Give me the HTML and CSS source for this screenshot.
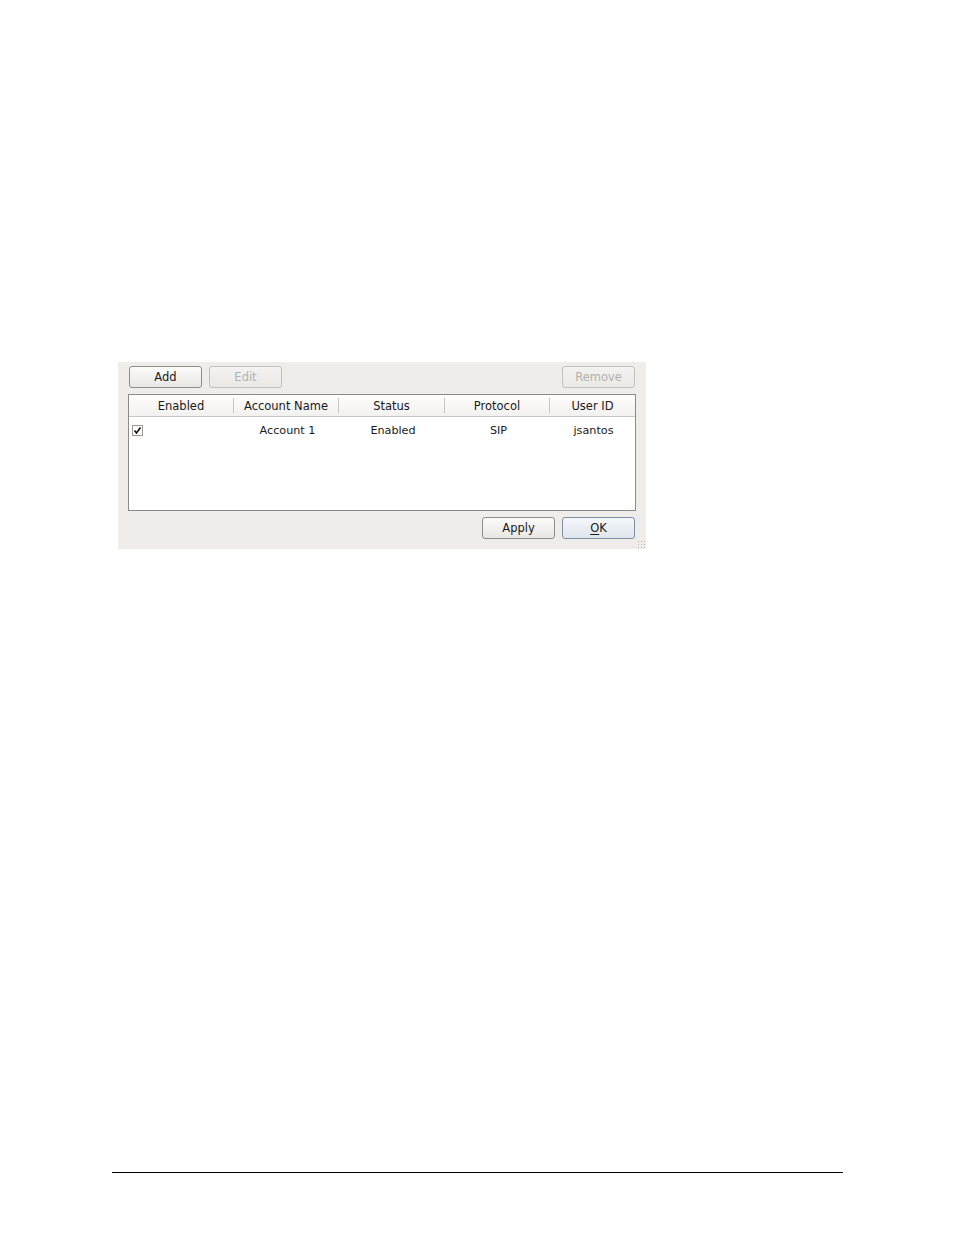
FILE: index.html
```html
<!DOCTYPE html>
<html>
<head>
<meta charset="utf-8">
<link rel="stylesheet" href="styles.css">
</head>
<body>
<div class="page">
  <div class="dialog">
    <div class="toolbar">
      <button class="btn">Add</button>
      <button class="btn disabled">Edit</button>
      <span class="spacer"></span>
      <button class="btn disabled">Remove</button>
    </div>
    <div class="table">
      <div class="thead">
        <div class="th">Enabled</div>
        <div class="th">Account Name</div>
        <div class="th">Status</div>
        <div class="th">Protocol</div>
        <div class="th last">User ID</div>
      </div>
      <div class="row">
        <div class="td check-cell"><span class="check">
          <svg width="11" height="11" viewBox="0 0 11 11"><rect x="0.5" y="0.5" width="10" height="10" fill="#fff" stroke="#9a9893"/><path d="M2.5 5.5 L4.5 8 L8.5 2.5" fill="none" stroke="#111" stroke-width="1.6"/></svg>
        </span></div>
        <div class="td">Account 1</div>
        <div class="td">Enabled</div>
        <div class="td">SIP</div>
        <div class="td">jsantos</div>
      </div>
    </div>
    <div class="footer">
      <button class="btn">Apply</button>
      <button class="btn ok"><u>O</u>K</button>
    </div>
    <span class="grip"></span>
  </div>
  <div class="rule"></div>
</div>
</body>
</html>
```
FILE: styles.css
```css
html, body { margin: 0; padding: 0; background: #fff; }
body { font-family: "DejaVu Sans", "Liberation Sans", sans-serif; font-size: 12px; color: #1a1a1a; }
.page { width: 954px; height: 1235px; position: relative; box-sizing: border-box; padding: 362px 0 0 118px; overflow: hidden; }
.dialog {
  position: relative;
  width: 528px;
  height: 187px;
  background: #efedea;
  box-sizing: border-box;
  padding: 4px 11px 0 10px;
}
.toolbar { display: flex; gap: 7px; height: 21px; margin-left: 1px; }
.spacer { flex: 1; }
.btn {
  width: 73px;
  height: 22px;
  box-sizing: border-box;
  border: 1px solid #8f8d89;
  border-radius: 3px;
  background: linear-gradient(#fbfbfa, #e9e7e4);
  font-family: inherit;
  font-size: 11.5px;
  color: #1a1a1a;
  padding: 0;
}
.btn.disabled { color: #b3b1ad; border-color: #c2c0bc; background: linear-gradient(#f3f2f0, #ebe9e6); }
.btn.ok { border-color: #7d8ea5; background: linear-gradient(#f5f7fa, #dfe5ee); }
.btn u { text-decoration-thickness: 1px; text-underline-offset: 2px; }
.table {
  margin-top: 7px;
  width: 508px;
  height: 117px;
  box-sizing: border-box;
  border: 1px solid #8c8a87;
  background: #fff;
}
.thead {
  display: grid;
  grid-template-columns: 105px 105px 106px 105px 1fr;
  height: 21px;
  border-bottom: 1px solid #c8c6c2;
  background: linear-gradient(#fdfdfc, #f2f1ef);
  font-size: 11.5px;
}
.th {
  display: flex; align-items: center; justify-content: center;
  border-right: 1px solid #c8c6c2;
  margin: 3px 0;
}
.th.last { border-right: none; }
.row {
  display: grid;
  grid-template-columns: 105px 105px 106px 105px 1fr;
  height: 27px;
  align-items: center;
}
.td { text-align: center; font-size: 11.2px; padding-left: 2px; }
.check-cell { text-align: left; padding-left: 3px; display: flex; align-items: center; }
.check { display: inline-flex; }
.footer {
  display: flex; justify-content: flex-end; gap: 7px;
  margin-top: 6px;
  width: 507px;
}
.grip {
  position: absolute; right: 1px; bottom: 1px;
  width: 8px; height: 8px;
  background-image: radial-gradient(#b9b6b1 0.7px, transparent 0.8px);
  background-size: 3px 3px;
}
.rule {
  position: absolute; left: 112px; top: 1172px;
  width: 731px; height: 1px; background: #000;
}
```
